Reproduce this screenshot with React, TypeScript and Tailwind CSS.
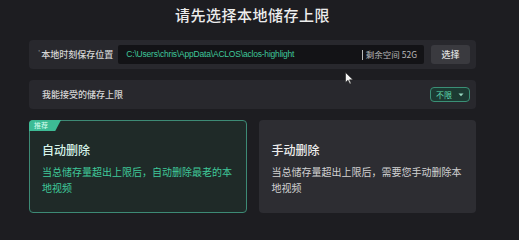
import React, { useState } from 'react';

type Mode = 'auto' | 'manual';

const App: React.FC = () => {
    const [mode, setMode] = useState<Mode>('auto');
    const [path] = useState('C:\\Users\\chris\\AppData\\ACLOS\\aclos-highlight');

    const cards = [
        { id: 'auto' as Mode, title: '自动删除', desc: '当总储存量超出上限后，自动删除最老的本地视频', recommended: true },
        { id: 'manual' as Mode, title: '手动删除', desc: '当总储存量超出上限后，需要您手动删除本地视频', recommended: false },
    ];

    return (
        <div className="relative w-[519px] h-[240px] overflow-hidden bg-[#1d1d21] font-['Noto_Sans_CJK_SC','Noto_Sans',sans-serif]">
            <div className="ml-[29px] w-[447px] flex flex-col">
                <h1 className="mt-[5px] h-[20px] text-center text-[15px] leading-[20px] font-medium text-[#ececec] tracking-[0.5px]">
                    请先选择本地储存上限
                </h1>

                {/* Save location */}
                <div className="mt-[15px] h-[29px] flex items-center rounded-[4px] bg-[#28282d] pl-[9px] pr-[6px]">
                    <span className="text-[5px] text-[#888] mr-[1px] -mt-[6px]">*</span>
                    <span className="text-[9px] leading-none text-[#d6d6d6] font-medium w-[77px]">本地时刻保存位置</span>
                    <div className="flex-1 h-[19px] flex items-center bg-[#131316] rounded-[2px] pl-[8px] pr-[7px]">
                        <span className="flex-1 text-[8.5px] leading-none text-[#3fc79a] font-['Liberation_Sans',sans-serif] tracking-[-0.2px]">{path}</span>
                        <span className="w-[1px] h-[10px] bg-[#bbb] mr-[3px]" />
                        <span className="text-[8.5px] leading-none text-[#b8b8b8]">剩余空间 52G</span>
                    </div>
                    <button className="ml-[7px] w-[39px] h-[19px] rounded-[3px] bg-[#3a3a3f] text-[9px] leading-none text-[#e2e2e2] font-medium">
                        选择
                    </button>
                </div>

                {/* Limit */}
                <div className="mt-[11px] h-[29px] flex items-center justify-between rounded-[4px] bg-[#28282d] pl-[13px] pr-[6px]">
                    <span className="text-[9px] leading-none text-[#d6d6d6] font-medium">我能接受的储存上限</span>
                    <div className="w-[40px] h-[15px] flex items-center justify-between rounded-[4px] border border-[#3b8f76] bg-[#1c3a32] pl-[5px] pr-[5px]">
                        <span className="text-[8px] leading-none text-[#5fd9ae]">不限</span>
                        <svg width="6" height="4" viewBox="0 0 6 4"><path d="M0.5 0.5 L3 3.2 L5.5 0.5 Z" fill="#9ad9c2" /></svg>
                    </div>
                </div>

                {/* Mode cards */}
                <div className="mt-[11px] grid grid-cols-2 gap-[12px]">
                    {cards.map((c) => {
                        const active = mode === c.id;
                        return (
                            <div
                                key={c.id}
                                onClick={() => setMode(c.id)}
                                className={`relative h-[93px] flex flex-col cursor-pointer rounded-[4px] pt-[22px] pl-[12px] pr-[10px] border ${active ? 'bg-[#1f2a28] border-[#3d8a75]' : 'bg-[#2d2d32] border-transparent'}`}
                            >
                                {c.recommended && (
                                    <span className="absolute -left-px -top-px h-[11px] w-[32px] flex items-center pl-[5px] bg-[#3dbb95] rounded-tl-[4px] [clip-path:polygon(0_0,100%_0,82%_100%,0_100%)] text-[7px] leading-none text-[#d9fff0]">
                                        推荐
                                    </span>
                                )}
                                <div className={`text-[12px] leading-[14px] font-medium ${active ? 'text-[#d6f3e9]' : 'text-[#ededed]'}`}>{c.title}</div>
                                <p className={`mt-[7px] text-[10px] leading-[16px] ${active ? 'text-[#3fc99a]' : 'text-[#d2d2d2]'}`}>{c.desc}</p>
                            </div>
                        );
                    })}
                </div>
            </div>

            {/* mouse pointer */}
            <svg className="absolute left-[345px] top-[72px]" width="9" height="13" viewBox="0 0 9 13">
                <path d="M0.5 0.5 L0.5 10.5 L3 8.2 L4.8 12 L6.2 11.4 L4.5 7.8 L8 7.8 Z" fill="#f4f4f4" stroke="#222" strokeWidth="0.6" />
            </svg>
        </div>
    );
};

export default App;
